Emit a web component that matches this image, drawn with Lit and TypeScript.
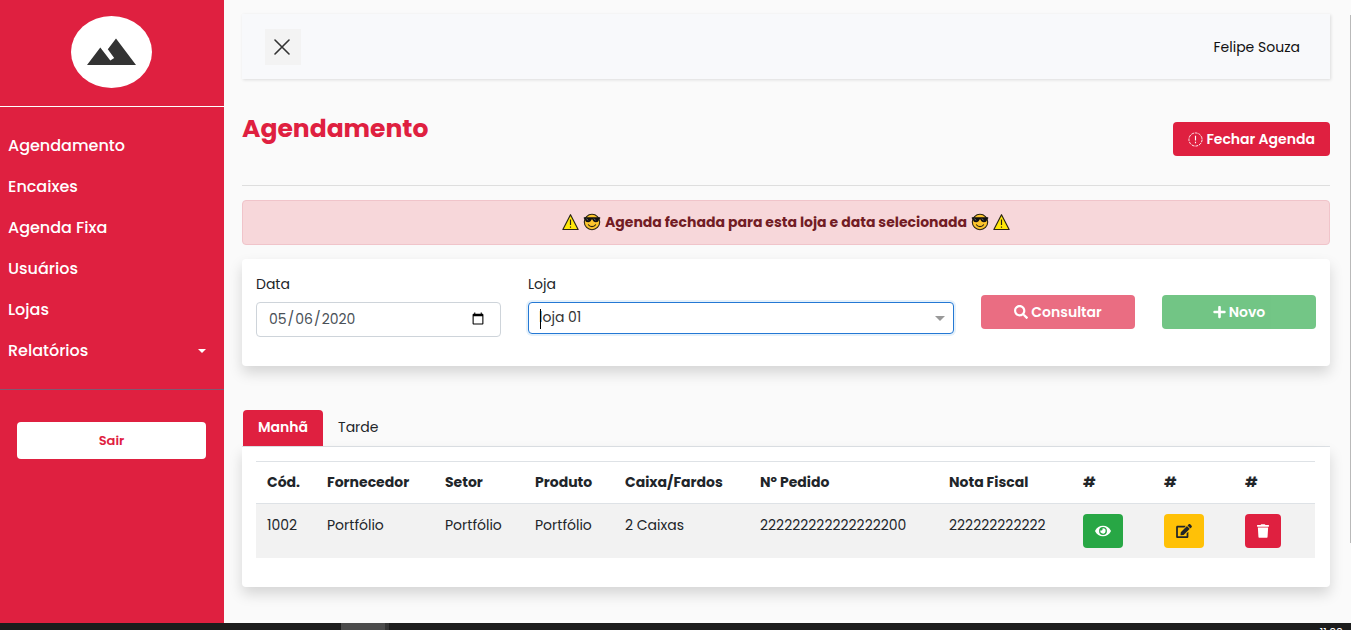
import { LitElement, html, css, svg } from "lit";
import { customElement, state } from "lit/decorators.js";

const warning = html`<svg class="emoji" viewBox="0 0 16 17" aria-hidden="true">
  <path d="M8 1.6 L15.2 15.6 H0.8 Z" fill="#ffe70a" stroke="#2a2413" stroke-width="1.1" stroke-linejoin="round"/>
  <path d="M8 6.2 V11.4 M8 12.7 V14" stroke="#2a2413" stroke-width="1.1"/>
</svg>`;

const cool = html`<svg class="emoji face" viewBox="0 0 18 18" aria-hidden="true">
  <circle cx="9" cy="9" r="7.7" fill="#fcc52c" stroke="#2a2413" stroke-width="1.1"/>
  <path d="M0.8 4.2 H17.2 V5.6 L16 6.2 C15.8 8.6 14.6 9.2 12.9 9.2 C11 9.2 10.1 8.2 9.5 6.4 H8.5 C7.9 8.2 7 9.2 5.1 9.2 C3.4 9.2 2.2 8.6 2 6.2 L0.8 5.6 Z" fill="#111"/>
  <path d="M3.5 5.6 L5 7.4 M11 5.6 L12.5 7.4" stroke="#888" stroke-width=".8"/>
  <path d="M5.4 11.8 C7 14.2 11 14.2 12.6 11.8" fill="none" stroke="#2a2413" stroke-width="1.1" stroke-linecap="round"/>
</svg>`;

const icon = (w: number, h: number, box: string, body: unknown) =>
  html`<svg class="icon" width=${w} height=${h} viewBox=${box} fill="currentColor" aria-hidden="true">${body}</svg>`;

const search = svg`<path d="M505 442.700L405.300 343c-4.500-4.500-10.600-7-17-7H372c27.600-35.300 44-79.700 44-128C416 93.100 322.900 0 208 0S0 93.100 0 208s93.100 208 208 208c48.300 0 92.700-16.400 128-44v16.300c0 6.400 2.500 12.500 7 17l99.700 99.700c9.400 9.400 24.600 9.400 33.900 0l28.300-28.300c9.400-9.400 9.400-24.600.1-34zM208 336c-70.700 0-128-57.200-128-128 0-70.700 57.200-128 128-128 70.700 0 128 57.200 128 128 0 70.700-57.200 128-128 128z"/>`;
const plus = svg`<path d="M416 208H272V64c0-17.670-14.330-32-32-32h-32c-17.670 0-32 14.330-32 32v144H32c-17.670 0-32 14.330-32 32v32c0 17.670 14.330 32 32 32h144v144c0 17.670 14.330 32 32 32h32c17.670 0 32-14.330 32-32V304h144c17.670 0 32-14.330 32-32v-32c0-17.670-14.330-32-32-32z"/>`;
const eye = svg`<path d="M572.520 241.400C518.290 135.590 410.930 64 288 64S57.680 135.640 3.480 241.410a32.350 32.350 0 0 0 0 29.190C57.710 376.410 165.070 448 288 448s230.320-71.640 284.520-177.410a32.350 32.350 0 0 0 0-29.190zM288 400a144 144 0 1 1 144-144 143.930 143.930 0 0 1-144 144zm0-240a95.310 95.310 0 0 0-25.310 3.790 47.850 47.850 0 0 1-66.900 66.900A95.780 95.780 0 1 0 288 160z"/>`;
const edit = svg`<path d="M402.600 83.200l90.200 90.200c3.800 3.800 3.800 10 0 13.800L274.400 405.600l-92.800 10.300c-12.400 1.400-22.900-9.100-21.500-21.500l10.300-92.800L388.800 83.200c3.800-3.800 10-3.800 13.800 0zm162-22.900l-48.800-48.800c-15.200-15.200-39.900-15.200-55.200 0l-35.400 35.400c-3.800 3.800-3.800 10 0 13.800l90.200 90.200c3.800 3.800 10 3.800 13.800 0l35.400-35.400c15.200-15.300 15.200-40 0-55.200zM384 346.200V448H64V128h229.800c3.200 0 6.200-1.300 8.500-3.500l40-40c7.600-7.600 2.200-20.500-8.500-20.500H48C21.500 64 0 85.500 0 112v352c0 26.500 21.500 48 48 48h352c26.500 0 48-21.500 48-48V306.200c0-10.700-12.900-16-20.500-8.500l-40 40c-2.200 2.300-3.500 5.300-3.500 8.500z"/>`;
const trash = svg`<path d="M432 32H312l-9.400-18.700A24 24 0 0 0 281.100 0H166.800a23.720 23.720 0 0 0-21.400 13.300L136 32H16A16 16 0 0 0 0 48v32a16 16 0 0 0 16 16h416a16 16 0 0 0 16-16V48a16 16 0 0 0-16-16zM53.200 467a48 48 0 0 0 47.900 45h245.800a48 48 0 0 0 47.900-45L416 128H32z"/>`;
const alertCircle = svg`<circle cx="8" cy="8" r="7" fill="none" stroke="currentColor" stroke-dasharray="3 1"/><path d="M8 4v5M8 10.500v1.500" stroke="currentColor" stroke-width="1.200"/>`;

@customElement("app-root")
export class AppRoot extends LitElement {
  @state() private tab = "Manhã";

  private rows = [
    ["1002", "Portfólio", "Portfólio", "Portfólio", "2 Caixas", "222222222222222200", "222222222222"],
  ];

  static styles = css`
    :host {
      display: flex;
      flex-direction: column;
      height: 100vh;
      overflow: hidden;
      background: #fafafa;
      color: #212529;
      font: 14px/22px Poppins, Inter, sans-serif;
    }
    * { box-sizing: border-box; }
    button, input, select { font: inherit; }
    button { cursor: pointer; }
    .screen { flex: 1; min-height: 0; display: flex; overflow: hidden; }

    .sidebar { flex: 0 0 224px; background: #df2040; color: #fff; }
    .brand { display: flex; justify-content: center; padding: 16px 2px 18px 0; border-bottom: 1px solid #fff; }
    .logo { display: block; width: 81px; height: 72px; }
    .menu { list-style: none; margin: 0; padding: 18px 0; border-bottom: 1px solid #7f5a72; }
    .menu a {
      display: flex; align-items: center; justify-content: space-between;
      padding: 8px 18px 8px 8px; line-height: 25px;
      color: #fff; font-size: 16px; font-weight: 500; text-decoration: none;
    }
    .arrow { border: 4px solid transparent; border-top-color: currentColor; border-bottom: 0; }
    .exit { padding: 32px 18px 0 17px; }
    .exit button {
      width: 100%; height: 37px; border: 0; border-radius: 4px;
      background: #fff; color: #df2040; font-size: 13px; font-weight: 600;
    }

    .content { flex: 1; min-width: 0; padding: 14px 20px 0 18px; }
    .rail { flex: 0 0 1px; margin: 15px 0 80px; background: #b9b9b9; }
    .topbar {
      display: flex; align-items: center; justify-content: space-between;
      height: 65px; padding: 0 30px 0 23px;
      background: #f8f9fb; box-shadow: 1px 1px 3px rgba(0, 0, 0, .12);
      color: #111;
    }
    .close { display: grid; place-items: center; width: 36px; height: 36px; padding: 1px 2px 0 0; border: 0; background: #f3f3f3; color: #333; }
    .heading {
      display: flex; justify-content: space-between; align-items: flex-start;
      margin-top: 35px; padding-bottom: 29px; border-bottom: 1px solid #dedede;
    }
    h1 { margin: 0; color: #df2040; font-size: 25px; line-height: 30px; font-weight: 700; }
    .btn {
      display: inline-flex; align-items: center; justify-content: center; gap: 3px;
      height: 34px; padding: 0 15px; border: 0; border-radius: 4px;
      color: #fff; font-weight: 600; white-space: nowrap;
    }
    .heading .btn { margin-top: 8px; }
    .red { background: #df2040; }
    .green { background: #28a745; }
    .yellow { background: #ffc107; color: #212529; }
    .btn:disabled { opacity: .65; cursor: default; }
    .icon { display: block; flex: none; }

    .alert {
      display: flex; align-items: center; justify-content: center; gap: 4px;
      height: 45px; margin-top: 14px; padding-bottom: 2px; border: 1px solid #f0c4ca; border-radius: 4px;
      background: #f7d7da; color: #721c24; font-weight: 700;
    }
    .emoji { width: 17px; height: 18px; }
    .face { width: 18px; height: 18px; }

    .card { background: #fff; border-radius: 4px; box-shadow: 0 7px 14px rgba(0, 0, 0, .15); }
    .filters {
      display: grid; grid-template-columns: 245fr 426fr 154fr 154fr; gap: 27px;
      margin-top: 14px; padding: 14px 14px 29px;
    }
    .field { display: flex; flex-direction: column; gap: 7px; min-width: 0; }
    .date {
      width: 100%; height: 35px; padding: 0 13px 1px 11px; border: 1px solid #ced4da; border-radius: 4px;
      background: #fff; color: #495057; outline: 0;
    }
    .combo { position: relative; }
    .combo select {
      display: block; width: 100%; height: 32px; padding: 0 10px 2px; appearance: none;
      border: 1px solid #2478d4; border-radius: 4px; background: #fff; color: #333;
      outline: 0; box-shadow: 0 0 0 2px #e5f1fb;
    }
    .caret { position: absolute; left: 12px; top: 7px; width: 1px; height: 20px; background: #000; }
    .combo .arrow { position: absolute; right: 9px; top: 14px; border-width: 5px 5px 0; color: #999; }
    .filters .btn { margin-top: 22px; width: 100%; }

    .tabs { display: flex; margin-top: 44px; padding-left: 1px; border-bottom: 1px solid #dee2e6; }
    .tab { height: 36px; padding: 0 15px 2px; border: 0; border-radius: 4px 4px 0 0; background: none; color: #212529; }
    .tab.active { background: #df2040; color: #fff; font-weight: 600; }
    .panel { padding: 14px 15px 29px 14px; border-radius: 0 0 4px 4px; }
    table { width: 100%; table-layout: fixed; border-collapse: separate; border-spacing: 0; }
    th, td { padding: 10px 0 10px 11px; text-align: left; vertical-align: top; white-space: nowrap; border-top: 1px solid #dee2e6; }
    th { padding: 9px 0 10px 11px; font-weight: 700; }
    td { background: #f2f2f2; }
    td .btn { padding: 0 12px; }
    .c-code { width: 60px; }
    .c-supplier { width: 118px; }
    .c-mid { width: 90px; }
    .c-box { width: 135px; }
    .c-order { width: 189px; }
    .c-note { width: 134px; }
    .c-act { width: 81px; }

    .taskbar { flex: 0 0 7px; display: flex; justify-content: space-between; overflow: hidden; background: #1c1c1c; }
    .task { width: 48px; margin-left: 341px; background: #4a4a4a; border-right: 4px solid #333; }
    .clock { padding: 3px 8px 0 0; color: #fff; font-size: 11px; line-height: 12px; }
  `;

  render() {
    const links = ["Agendamento", "Encaixes", "Agenda Fixa", "Usuários", "Lojas", "Relatórios"];
    return html`
      <div class="screen">
        <nav class="sidebar">
          <div class="brand">
            <svg class="logo" viewBox="0 0 81 72" role="img" aria-label="Logo">
              <ellipse cx="40.500" cy="36" rx="40.500" ry="36" fill="#fff"/>
              <path d="M16 49 L29.300 31.500 L39.300 44.600 L43.200 42 L36.800 33.200 L45 22.500 L65 49 Z" fill="#333"/>
            </svg>
          </div>
          <ul class="menu">
            ${links.map((l) => html`<li><a href="#">${l}${l === "Relatórios" ? html`<span class="arrow"></span>` : ""}</a></li>`)}
          </ul>
          <div class="exit"><button type="button">Sair</button></div>
        </nav>
        <main class="content">
          <header class="topbar">
            <button class="close" type="button" aria-label="Fechar menu">
              <svg width="16" height="16" viewBox="0 0 16 16" fill="none" stroke="currentColor" stroke-width="1.600" stroke-linecap="round"><path d="M1 1 L15 15 M15 1 L1 15"/></svg>
            </button>
            <span>Felipe Souza</span>
          </header>
          <div class="heading">
            <h1>Agendamento</h1>
            <button class="btn red" type="button">${icon(15, 15, "0 0 16 16", alertCircle)}Fechar Agenda</button>
          </div>
          <div class="alert" role="alert">
            ${warning}${cool}<span>Agenda fechada para esta loja e data selecionada</span>${cool}${warning}
          </div>
          <form class="card filters">
            <div class="field">
              <label for="data">Data</label>
              <input id="data" class="date" type="date" value="2020-05-06">
            </div>
            <div class="field">
              <label for="loja">Loja</label>
              <div class="combo">
                <select id="loja"><option>loja 01</option></select>
                <span class="caret"></span><span class="arrow"></span>
              </div>
            </div>
            <button class="btn red" type="button" disabled>${icon(14, 14, "0 0 512 512", search)}Consultar</button>
            <button class="btn green" type="button" disabled>${icon(13, 14, "0 0 448 512", plus)}Novo</button>
          </form>
          <div class="tabs" role="tablist">
            ${["Manhã", "Tarde"].map((t) => html`<button type="button" role="tab" aria-selected=${t === this.tab}
              class="tab ${t === this.tab ? "active" : ""}" @click=${() => (this.tab = t)}>${t}</button>`)}
          </div>
          <section class="card panel">
            <table>
              <colgroup>
                <col class="c-code"><col class="c-supplier"><col class="c-mid"><col class="c-mid"><col class="c-box">
                <col class="c-order"><col class="c-note"><col class="c-act"><col class="c-act"><col class="c-act">
              </colgroup>
              <thead><tr>${["Cód.", "Fornecedor", "Setor", "Produto", "Caixa/Fardos", "Nº Pedido", "Nota Fiscal", "#", "#", "#"].map((h) => html`<th scope="col">${h}</th>`)}</tr></thead>
              <tbody>
                ${this.rows.map((r) => html`<tr>
                  ${r.map((c) => html`<td>${c}</td>`)}
                  <td><button class="btn green" type="button" aria-label="Ver">${icon(16, 14, "0 0 576 512", eye)}</button></td>
                  <td><button class="btn yellow" type="button" aria-label="Editar">${icon(16, 14, "0 0 576 512", edit)}</button></td>
                  <td><button class="btn red" type="button" aria-label="Excluir">${icon(12, 14, "0 0 448 512", trash)}</button></td>
                </tr>`)}
              </tbody>
            </table>
          </section>
        </main>
        <div class="rail"></div>
      </div>
      <footer class="taskbar"><span class="task"></span><span class="clock">11:00</span></footer>
    `;
  }
}
